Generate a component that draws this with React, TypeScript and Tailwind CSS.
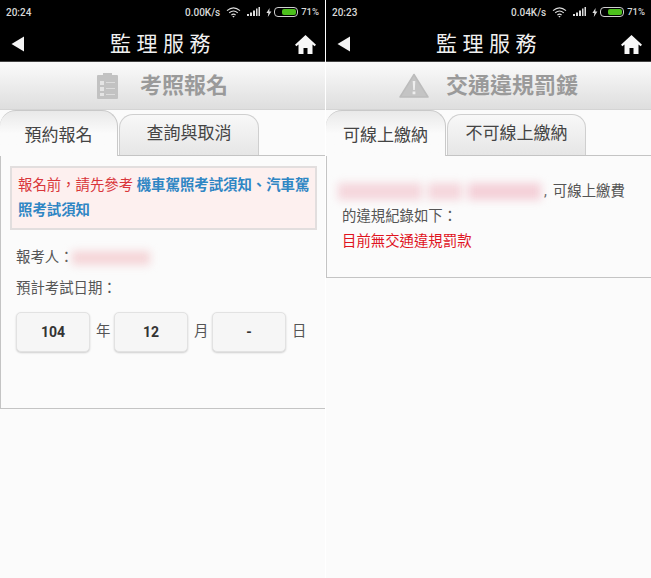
const CJK = "font-['Roboto','Noto_Sans_CJK_TC',sans-serif]";

function StatusBar({ time, speed }: { time: string; speed: string }) {
  return (
    <div className="flex h-[23px] items-center bg-black px-[6px] pt-[1px] text-[#d8d8d8]">
      <span className="text-[10px] font-medium">{time}</span>
      <span className="ml-auto text-[10px] font-medium">{speed}</span>
      <svg width="15" height="11" viewBox="0 0 15 11" className="ml-[6px]" fill="none" stroke="#ddd" strokeWidth="1.1">
        <path d="M1 3.6C5 .2 10 .2 14 3.6" />
        <path d="M3.2 5.8c2.7-2.2 6-2.2 8.6 0" />
        <path d="M5.4 8c1.3-1 3-1 4.2 0" />
        <path d="M7.5 10.6 6.4 9.4c.7-.4 1.5-.4 2.2 0z" fill="#ddd" stroke="none" />
      </svg>
      <svg width="14" height="10" viewBox="0 0 14 10" className="ml-[6px]" fill="#ddd">
        <rect x="0" y="7" width="2" height="2" />
        <rect x="3" y="5.5" width="2" height="3.5" />
        <rect x="6" y="3.5" width="2" height="5.5" />
        <rect x="9" y="1.5" width="1.5" height="7.5" />
        <rect x="11.5" y="0" width="1.5" height="9" />
      </svg>
      <svg width="6" height="9" viewBox="0 0 6 9" className="ml-[5px]" fill="#ddd">
        <path d="M3.6 0 .4 5h2L1.8 9 5.4 3.6H3.3z" />
      </svg>
      <div className="ml-[2px] flex h-[10px] w-[24px] items-center rounded-[4px] border border-[#cfcfcf] p-[1px]">
        <div className="ml-auto h-full w-[72%] rounded-[2px] bg-[#4cc01c]" />
      </div>
      <span className="ml-[3px] text-[9.5px] font-medium">71%</span>
    </div>
  );
}

function Header() {
  return (
    <div className="flex h-[39px] items-center justify-between border-b border-[#444] bg-black pt-[1px]">
      <svg width="14" height="16" viewBox="0 0 14 16" className="ml-[11px] mt-[2px]" fill="#f4f4f4">
        <path d="M13 .5V15.5L.5 8z" />
      </svg>
      <span className="ml-[6px] mt-[3px] text-[21px] leading-none tracking-[5.5px] text-[#f0f0f0]">監理服務</span>
      <svg width="21" height="19" viewBox="0 0 21 19" className="mr-[9px] mt-[3px]" fill="#f7f7f7">
        <path d="M10.500 0 0 9.800l1.400 1.500L3.500 9.400V19h5v-6h4v6h5V9.400l2.100 1.900L21 9.800z" />
      </svg>
    </div>
  );
}

function TitleBar({ title, icon, gap }: { title: string; icon: React.ReactNode; gap: string }) {
  return (
    <div className="flex h-[48px] items-center justify-center border-b border-[#d4d4d4] bg-gradient-to-b from-[#fbfbfb] to-[#dedede]">
      {icon}
      <span className={`${gap} text-[22px] font-bold leading-none text-[#9a9a9a]`}>{title}</span>
    </div>
  );
}

function Tabs({ active, other, activeW, otherW }: { active: string; other: string; activeW: string; otherW: string }) {
  return (
    <div className="relative flex h-[45px] items-end">
      <div className={`${activeW} z-10 -mb-[1px] flex h-[46px] items-center justify-center rounded-t-[16px] border-r border-t border-[#c9c9c9] bg-gradient-to-b from-[#e9e9e9] via-[#fbfbfb] to-[#fbfbfb] pt-[5px] text-[17px] text-[#444]`}>
        {active}
      </div>
      <div className={`${otherW} ml-[1px] flex h-[41px] items-center justify-center rounded-t-[14px] border border-b-0 border-[#cfcfcf] bg-gradient-to-b from-[#f8f8f8] to-[#e6e6e6] pb-[3px] text-[17px] text-[#444]`}>
        {other}
      </div>
    </div>
  );
}

function DateBox({ value }: { value: string }) {
  return (
    <div className="flex h-[40px] w-[74px] items-center justify-center rounded-[5px] border border-[#e2e2e2] bg-[#f6f6f6] text-[14px] font-bold text-[#333] shadow-[0_1px_2px_rgba(0,0,0,0.18)]">
      {value}
    </div>
  );
}

export default function App() {
  return (
    <div className={`${CJK} flex h-[578px] w-[651px] overflow-hidden bg-white`}>
      <div className="flex w-[325px] flex-col bg-[#fbfbfb]">
        <StatusBar time="20:24" speed="0.00K/s" />
        <Header />
        <TitleBar
          title="考照報名"
          gap="ml-[22px]"
          icon={
            <svg width="21" height="26" viewBox="0 0 21 26" fill="#c2c2c2" className="blur-[0.4px]">
              <path d="M6 0h9v2h5a1 1 0 0 1 1 1v22a1 1 0 0 1-1 1H1a1 1 0 0 1-1-1V3a1 1 0 0 1 1-1h5z" />
              <path d="M3 8h4v4H3zM3 14h4v4H3zM3 20h4v3H3z" fill="#e4e4e4" />
              <path d="M9 9h9v1H9zM9 15h9v1H9zM9 21h9v1H9z" fill="#dcdcdc" />
            </svg>
          }
        />
        <Tabs active="預約報名" other="查詢與取消" activeW="w-[118px]" otherW="w-[140px]" />
        <div className="flex h-[254px] flex-col border border-r-0 border-[#c4c4c4] pl-[9px] pr-[8px] pt-[10px]">
          <div className="border-2 border-[#e2dede] bg-[#fdf0ef] px-[6px] py-[5px] text-[14.4px] leading-[25px]">
            <div className="whitespace-nowrap text-[#d9363a]">
              報名前，請先參考 <span className="font-bold text-[#2f86c4]">機車駕照考試須知、汽車駕</span>
            </div>
            <div className="font-bold text-[#2f86c4]">照考試須知</div>
          </div>
          <div className="mt-[16px] flex items-center pl-[6px] text-[14.4px] leading-[24px] text-[#555]">
            報考人：
            <div className="-ml-[2px] h-[14px] w-[78px] bg-[#f5d5d8] blur-[4px]" />
          </div>
          <div className="mt-[7px] pl-[6px] text-[14.4px] leading-[24px] text-[#555]">預計考試日期：</div>
          <div className="mt-[11px] flex items-center pl-[6px] text-[14.4px] text-[#555]">
            <DateBox value="104" />
            <span className="mx-[6px] w-[12px] text-center">年</span>
            <DateBox value="12" />
            <span className="mx-[6px] w-[12px] text-center">月</span>
            <DateBox value="-" />
            <span className="ml-[6px] w-[12px] text-center">日</span>
          </div>
        </div>
      </div>
      <div className="ml-[1px] flex w-[325px] flex-col bg-[#fbfbfb]">
        <StatusBar time="20:23" speed="0.04K/s" />
        <Header />
        <TitleBar
          title="交通違規罰鍰"
          gap="ml-[17px]"
          icon={
            <svg width="30" height="25" viewBox="0 0 30 25" className="blur-[0.4px]">
              <path d="M15 1.500 29 24H1z" fill="#c4c4c4" stroke="#bcbcbc" strokeWidth="1.500" strokeLinejoin="round" />
              <path d="M13.700 8h2.600l-.5 9h-1.600zM13.600 18.500h2.800V21.300h-2.800z" fill="#eeeeee" />
            </svg>
          }
        />
        <Tabs active="可線上繳納" other="不可線上繳納" activeW="w-[120px]" otherW="w-[139px]" />
        <div className="h-[123px] border border-r-0 border-[#c4c4c4] px-[15px] pt-[23px] text-[14.4px] leading-[25px] text-[#555]">
          <div className="flex items-center whitespace-nowrap">
            <div className="-ml-[4px] flex h-[17px] w-[203px] gap-[6px] blur-[4px]">
              <div className="w-[84px] bg-[#f5d6dc]" />
              <div className="w-[34px] bg-[#f5d6dc]" />
              <div className="flex-1 bg-[#f4d0d8]" />
            </div>
            <span className="ml-[3px]">,</span>
            <span className="ml-[6px]">可線上繳費</span>
          </div>
          <div>的違規紀錄如下：</div>
          <div className="text-[#e0141e]">目前無交通違規罰款</div>
        </div>
      </div>
    </div>
  );
}
